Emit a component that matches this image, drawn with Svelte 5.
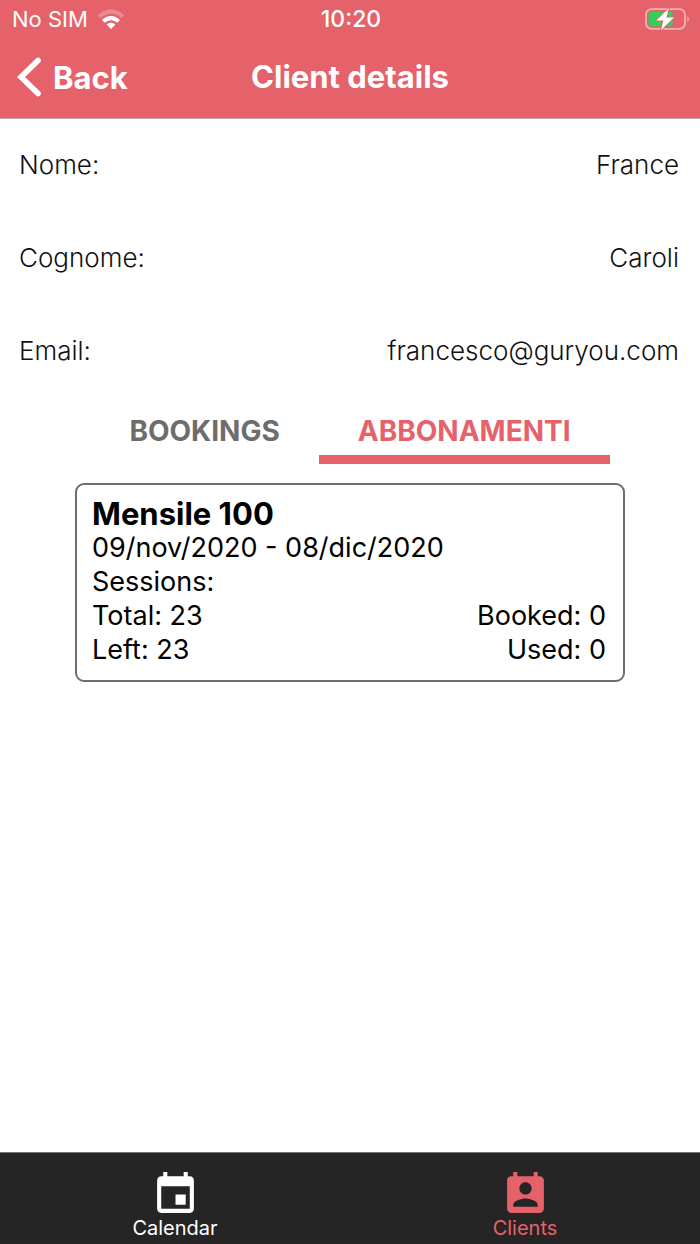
<script lang="ts">
  let activeTab = $state('subscriptions');
  let section = $state('clients');

  const fields = [
    { label: 'Nome:', value: 'France' },
    { label: 'Cognome:', value: 'Caroli' },
    { label: 'Email:', value: 'francesco@guryou.com' },
  ];

  const tabs = [
    { id: 'bookings', label: 'BOOKINGS' },
    { id: 'subscriptions', label: 'ABBONAMENTI' },
  ];

  const sections = [
    {
      id: 'calendar',
      label: 'Calendar',
      icon: 'M17 12h-5v5h5v-5zM16 1v2H8V1H6v2H5c-1.11 0-1.99.9-1.99 2L3 19c0 1.1.89 2 2 2h14c1.1 0 2-.9 2-2V5c0-1.1-.9-2-2-2h-1V1h-2zm3 18H5V8h14v11z',
    },
    {
      id: 'clients',
      label: 'Clients',
      icon: 'M19 3h-1V1h-2v2H8V1H6v2H5c-1.11 0-2 .9-2 2v14c0 1.1.89 2 2 2h14c1.1 0 2-.9 2-2V5c0-1.1-.9-2-2-2zm-7 3c1.66 0 3 1.34 3 3s-1.34 3-3 3-3-1.34-3-3 1.34-3 3-3zm6 12H6v-1c0-2 4-3.1 6-3.1s6 1.1 6 3.1v1z',
    },
  ];
</script>

<div class="screen">
  <header>
    <div class="status">
      <span class="carrier">
        No SIM
        <svg width="28" height="21" viewBox="0 0 28 21" aria-hidden="true">
          <path d="M0.6 6.4C8 -1.4 20 -1.4 27.4 6.4L24.6 9.3C18.8 3.3 9.2 3.3 3.4 9.3Z" fill="#fff" opacity="0.25" />
          <path d="M5 11C10 5.8 18 5.8 23 11L20.1 13.8C16.7 10.4 11.3 10.4 7.9 13.8Z" fill="#fff" />
          <path d="M9.6 15.5C12.1 13 15.9 13 18.4 15.5L14 20Z" fill="#fff" />
        </svg>
      </span>
      <time>10:20</time>
      <svg class="battery" width="46" height="24" viewBox="0 0 46 24" aria-hidden="true">
        <rect x="2" y="2.2" width="39" height="19.6" rx="5.5" fill="none" stroke="#fff" stroke-opacity="0.5" stroke-width="1.8" />
        <path d="M43.4 9.2C45.4 10.4 45.4 14 43.4 15.2Z" fill="#fff" opacity="0.5" />
        <rect x="4.6" y="4.8" width="24" height="14.4" rx="2.5" fill="#30d158" />
        <path d="M25 1L12.4 13.4H19.4L17 23L30 10.6H22.4Z" fill="#fff" stroke="#e5626b" stroke-width="1.6" stroke-linejoin="round" paint-order="stroke" />
      </svg>
    </div>
    <div class="navbar">
      <button class="back" type="button">
        <svg width="24" height="40" viewBox="0 0 24 40" aria-hidden="true">
          <path d="M21 3.5L4 20L21 36.5" fill="none" stroke="#fff" stroke-width="5.6" stroke-linecap="round" />
        </svg>
        Back
      </button>
      <h1>Client details</h1>
    </div>
  </header>

  <main>
    <dl>
      {#each fields as field}
        <div class="field">
          <dt>{field.label}</dt>
          <dd>{field.value}</dd>
        </div>
      {/each}
    </dl>

    <div class="tabs" role="tablist">
      {#each tabs as tab}
        <button
          type="button"
          role="tab"
          aria-selected={activeTab === tab.id}
          class:active={activeTab === tab.id}
          onclick={() => (activeTab = tab.id)}>{tab.label}</button>
      {/each}
    </div>

    <article>
      <h2>Mensile 100</h2>
      <p>09/nov/2020 - 08/dic/2020</p>
      <p>Sessions:</p>
      <p class="counts"><span>Total: 23</span><span>Booked: 0</span></p>
      <p class="counts"><span>Left: 23</span><span>Used: 0</span></p>
    </article>
  </main>

  <nav>
    {#each sections as item}
      <button type="button" class:current={section === item.id} onclick={() => (section = item.id)}>
        <svg width="49" height="49" viewBox="0 0 24 24" aria-hidden="true"><path d={item.icon} fill="currentColor" /></svg>
        <span>{item.label}</span>
      </button>
    {/each}
  </nav>
</div>

<style>
  :global(body) {
    margin: 0;
    background: #fff;
  }

  .screen {
    display: flex;
    flex-direction: column;
    min-height: 100vh;
    font-family: Inter, 'Liberation Sans', sans-serif;
    color: #000;
  }

  button {
    margin: 0;
    border: 0;
    background: none;
    font-family: inherit;
    cursor: pointer;
  }

  header {
    background: #e5626b;
    border-bottom: 1px solid #c4a5a8;
    color: #fff;
  }

  .status,
  .navbar {
    display: grid;
    grid-template-columns: 1fr auto 1fr;
    align-items: center;
  }

  .status {
    height: 38px;
    padding: 0 10px 0 12px;
    font-size: 22px;
  }

  .carrier {
    display: flex;
    align-items: center;
    gap: 9px;
  }

  time {
    font-weight: 500;
    font-size: 23px;
  }

  .battery {
    justify-self: end;
  }

  .navbar {
    height: 80px;
    padding: 0 17px;
    box-sizing: border-box;
    align-items: start;
  }

  .back {
    display: flex;
    align-items: center;
    justify-self: start;
    gap: 12px;
    padding: 0;
    height: 78px;
    color: #fff;
    font-size: 31px;
    font-weight: 700;
  }

  h1 {
    margin: 0;
    font-size: 31px;
    line-height: 78px;
    font-weight: 700;
  }

  main {
    flex: 1;
  }

  dl {
    display: grid;
    gap: 2px;
    margin: 0;
    padding: 0 21px 0 19px;
  }

  .field {
    display: flex;
    justify-content: space-between;
    line-height: 91px;
    font-size: 26px;
    font-weight: 300;
    color: #111;
  }

  dd {
    margin: 0;
  }

  .tabs {
    display: flex;
    justify-content: center;
  }

  .tabs button {
    padding: 19px 39px 8px;
    border-bottom: 9px solid transparent;
    font-size: 28px;
    line-height: 32px;
    font-weight: 700;
    color: #6d6d6d;
  }

  .tabs button.active {
    color: #e5626b;
    border-bottom-color: #e5626b;
  }

  article {
    margin: 19px 75px 0;
    padding: 12px 17px 13px 15px;
    border: 2px solid #6d6d6d;
    border-radius: 9px;
    font-size: 27px;
    line-height: 34px;
  }

  h2 {
    margin: 0;
    font-size: 31px;
    line-height: 34px;
    font-weight: 700;
  }

  p {
    margin: 0;
  }

  .counts {
    display: flex;
    justify-content: space-between;
  }

  nav {
    display: grid;
    grid-template-columns: 1fr 1fr;
    background: #252525;
    border-top: 1px solid #777;
  }

  nav button {
    display: flex;
    flex-direction: column;
    align-items: center;
    padding: 17px 0 5px;
    color: #fff;
    font-size: 20px;
    line-height: 22px;
  }

  nav svg {
    margin-bottom: -2px;
  }

  nav button.current {
    color: #e5626b;
  }
</style>
